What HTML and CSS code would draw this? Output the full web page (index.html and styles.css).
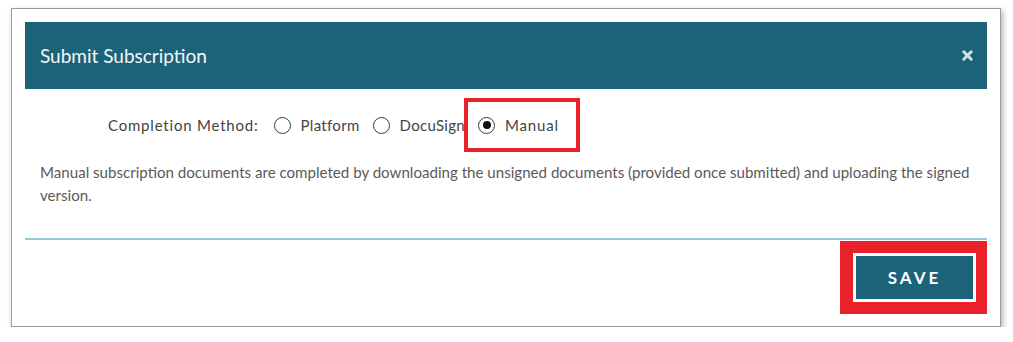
FILE: index.html
```html
<!DOCTYPE html>
<html lang="en">
<head>
    <meta charset="UTF-8">
    <meta name="viewport" content="width=device-width, initial-scale=1.0">
    <title>Submit Subscription</title>
    <link rel="stylesheet" href="styles.css">
</head>
<body>

<div class="dialog">
    <div class="dialog-header">
        <h2 class="dialog-title">Submit Subscription</h2>
        <span class="close-btn">
            <svg width="11" height="11" viewBox="0 0 11 11">
                <path d="M1.8 1.8 L9.2 9.2 M9.2 1.8 L1.8 9.2" stroke="#d3e0e5" stroke-width="3" stroke-linecap="round"/>
            </svg>
        </span>
    </div>

    <div class="method-row">
        <span class="method-label">Completion Method:</span>
        <label class="radio-option"><span class="radio"></span> Platform</label>
        <label class="radio-option"><span class="radio"></span> DocuSign</label>
        <span class="highlight">
            <label class="radio-option"><span class="radio checked"></span> Manual</label>
        </span>
    </div>

    <p class="method-note">Manual subscription documents are completed by downloading the unsigned documents (provided once submitted) and uploading the signed version.</p>

    <div class="dialog-footer">
        <span class="highlight highlight-save">
            <button type="button" class="save-btn">SAVE</button>
        </span>
    </div>
</div>

</body>
</html>
```

FILE: styles.css
```css
body {
    font-family: Lato, "Open Sans", sans-serif;
    margin: 0;
    background: #fff;
}
.dialog {
    margin: 8px 0 0 11px;
    width: 962px;
    height: 291px;
    padding: 13px 13px;
    border: 1px solid #9c9c9c;
    box-shadow: 2px 3px 6px rgba(0, 0, 0, 0.3);
    background: #fff;
}
.dialog-header {
    height: 67px;
    background-color: #1c6379;
    display: flex;
    align-items: center;
    justify-content: space-between;
    padding: 0 15px;
}
.dialog-title {
    margin: 0;
    color: #f4f7f8;
    font-size: 19px;
    font-weight: normal;
}
.close-btn {
    display: flex;
    margin-right: -1px;
}
.method-row {
    display: flex;
    align-items: center;
    margin-top: 9px;
    padding-left: 83px;
    height: 54px;
    font-size: 15px;
    color: #444;
}
.method-label {
    margin-right: 15px;
    letter-spacing: 0.8px;
}
.radio-option {
    display: flex;
    align-items: center;
    gap: 10px;
    margin-right: 13px;
    letter-spacing: 0.3px;
}
.radio {
    width: 15px;
    height: 15px;
    border: 1.5px solid #3a3a3a;
    border-radius: 50%;
    display: flex;
    align-items: center;
    justify-content: center;
}
.radio.checked::after {
    content: "";
    width: 8px;
    height: 8px;
    border-radius: 50%;
    background: #111;
}
.highlight {
    display: flex;
    align-items: center;
    height: 46px;
    border: 4px solid #e8212b;
    padding: 0 17px 0 10px;
    margin-left: -14px;
    background: #fff;
}
.highlight .radio-option {
    margin-right: 0;
    letter-spacing: 0.8px;
}
.method-note {
    margin: 9px 0 0;
    padding-left: 15px;
    font-size: 15.1px;
    line-height: 23px;
    color: #5a5a5a;
}
.dialog-footer {
    margin-top: 31px;
    border-top: 2px solid #94c9da;
    display: flex;
    justify-content: flex-end;
    padding-top: 1px;
}
.highlight-save {
    margin: 0;
    height: auto;
    border-width: 12px 11px 12px 13px;
    padding: 3px;
}
.save-btn {
    background-color: #1c6379;
    color: white;
    width: 117px;
    height: 43px;
    border: none;
    font-family: Lato, sans-serif;
    font-weight: bold;
    font-size: 17px;
    letter-spacing: 3px;
    cursor: pointer;
}
```
